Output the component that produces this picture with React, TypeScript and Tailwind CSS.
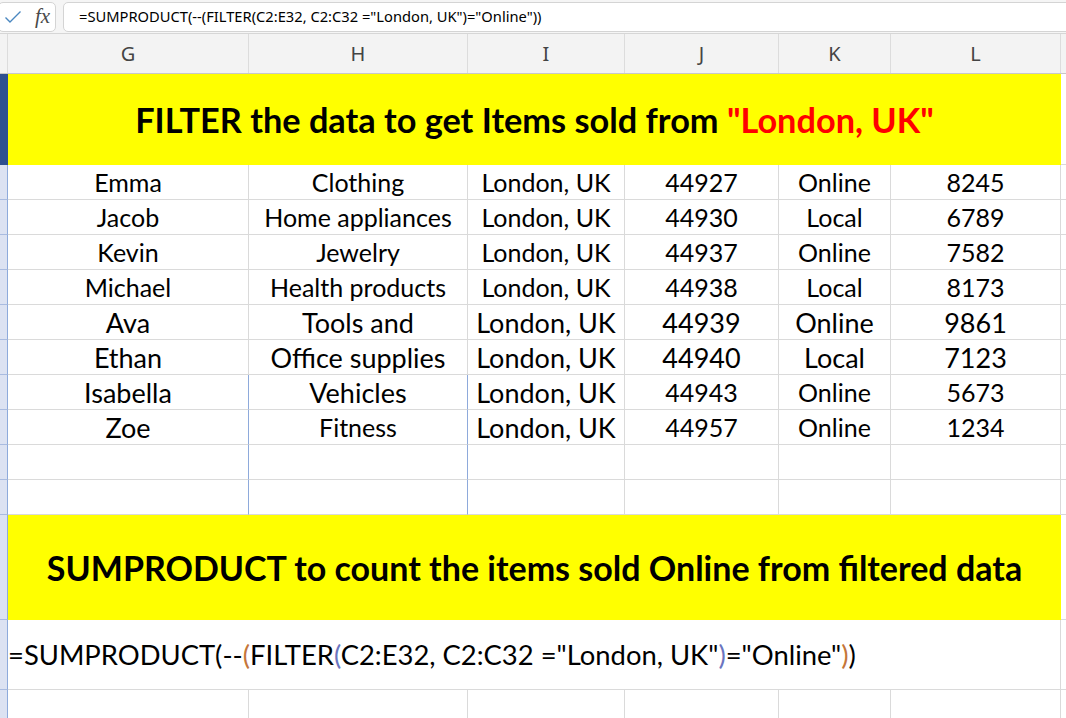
import React from "react";

const W = ["w-[241px]", "w-[219px]", "w-[157px]", "w-[154px]", "w-[112px]", "w-[170px]"];

type RowData = { cells: string[]; big: boolean[] };

const rows: RowData[] = [
  { cells: ["Emma", "Clothing", "London, UK", "44927", "Online", "8245"], big: [false, false, false, false, false, false] },
  { cells: ["Jacob", "Home appliances", "London, UK", "44930", "Local", "6789"], big: [false, false, false, false, false, false] },
  { cells: ["Kevin", "Jewelry", "London, UK", "44937", "Online", "7582"], big: [false, false, false, false, false, false] },
  { cells: ["Michael", "Health products", "London, UK", "44938", "Local", "8173"], big: [false, false, false, false, false, false] },
  { cells: ["Ava", "Tools and", "London, UK", "44939", "Online", "9861"], big: [true, true, true, true, true, true] },
  { cells: ["Ethan", "Office supplies", "London, UK", "44940", "Local", "7123"], big: [true, true, true, true, true, true] },
  { cells: ["Isabella", "Vehicles", "London, UK", "44943", "Online", "5673"], big: [true, true, true, false, false, false] },
  { cells: ["Zoe", "Fitness", "London, UK", "44957", "Online", "1234"], big: [true, false, true, false, false, false] },
];

const font = { fontFamily: "Lato, 'Open Sans', sans-serif" };

function RowHead({ dark = false, h }: { dark?: boolean; h: string }) {
  return (
    <div
      className={`${h} w-[8px] shrink-0 border-r border-b ${
        dark ? "bg-[#2f5090] border-r-[#2f5090] border-b-[#2f5090]" : "bg-[#dce2f2] border-r-[#8eaadb] border-b-[#a9bbe0]"
      }`}
    />
  );
}

function DataRow({ r, blueLines }: { r?: RowData; blueLines: boolean }) {
  return (
    <div className="flex h-[35px]">
      <RowHead h="h-[35px]" />
      {W.map((w, i) => (
        <div
          key={i}
          className={`${w} h-[35px] shrink-0 border-r border-b border-[#dadada] flex items-center justify-center whitespace-nowrap text-black ${
            blueLines && (i === 0 || i === 1) ? "border-r-[#8eaadb]" : ""
          } ${r && r.big[i] ? "text-[27px]" : "text-[25px]"}`}
          style={font}
        >
          <span className="leading-none pt-[1px]">{r ? r.cells[i] : ""}</span>
        </div>
      ))}
      <div className="flex-1 h-[35px] border-b border-[#dadada]" />
    </div>
  );
}

function Check() {
  return (
    <svg width="18" height="14" viewBox="0 0 18 14" className="block">
      <path d="M1.5 7.5 L6 12 L16.5 1.5" fill="none" stroke="#4a87c0" strokeWidth="1.4" />
    </svg>
  );
}

export default function App() {
  return (
    <div className="w-[1066px] h-[718px] overflow-hidden bg-white">
      {/* formula bar */}
      <div className="h-[34px] bg-[#f5f5f5] border-b border-[#d6d6d6] flex items-center gap-[7px] pl-0">
        <div className="h-[30px] w-[58px] -ml-[2px] bg-white border border-[#d4d4d4] rounded-[5px] flex items-center pl-[5px] gap-[13px]">
          <Check />
          <span
            className="italic text-[21px] text-[#4a4a4a] leading-none"
            style={{ fontFamily: "'Liberation Serif', serif" }}
          >
            fx
          </span>
        </div>
        <div className="h-[30px] flex-1 -mr-[10px] bg-white border border-[#d4d4d4] rounded-[5px] flex items-center pl-[15px]">
          <span className="text-[14.7px] text-black whitespace-nowrap" style={{ fontFamily: "'Noto Sans', 'Open Sans', sans-serif" }}>
            =SUMPRODUCT(--(FILTER(C2:E32, C2:C32 ="London, UK")="Online"))
          </span>
        </div>
      </div>

      {/* column headers */}
      <div className="flex h-[40px] bg-[#f3f3f3] border-b border-[#c8c8c8]">
        <div className="w-[8px] shrink-0 border-r border-[#dcdcdc]" />
        {["G", "H", "I", "J", "K", "L"].map((c, i) => (
          <div
            key={c}
            className={`${W[i]} shrink-0 border-r border-[#dcdcdc] flex items-center justify-center text-[20px] text-[#444]`}
            style={{ fontFamily: "'Noto Sans', 'Open Sans', sans-serif" }}
          >
            {c}
          </div>
        ))}
        <div className="flex-1" />
      </div>

      {/* title row 1 */}
      <div className="flex h-[91px]">
        <div className="h-[91px] w-[8px] shrink-0 bg-[#2f5090]" />
        <div
          className="w-[1053px] h-[91px] shrink-0 bg-[#ffff00] flex items-center justify-center font-bold text-[34.3px] text-black whitespace-nowrap"
          style={font}
        >
          <span>
            FILTER the data to get Items sold from <span className="text-[#ff0000]">"London, UK"</span>
          </span>
        </div>
        <div className="flex-1 border-b border-[#dadada]" />
      </div>

      {rows.map((r, i) => (
        <DataRow key={i} r={r} blueLines={i >= 6} />
      ))}
      <DataRow blueLines />
      <DataRow blueLines />

      {/* title row 2 */}
      <div className="flex h-[105px]">
        <RowHead h="h-[105px]" />
        <div
          className="w-[1053px] h-[105px] shrink-0 bg-[#ffff00] flex items-center justify-center font-bold text-[34px] text-black whitespace-nowrap"
          style={font}
        >
          SUMPRODUCT to count the items sold Online from filtered data
        </div>
        <div className="flex-1 border-b border-[#dadada]" />
      </div>

      {/* formula row */}
      <div className="flex h-[70px]">
        <RowHead h="h-[70px]" />
        <div
          className="w-[1053px] h-[70px] shrink-0 border-r border-b border-[#dadada] flex items-center pl-0 text-[27.4px] text-black whitespace-nowrap"
          style={font}
        >
          <span>
            =SUMPRODUCT(--<span className="text-[#c5763a]">(</span>FILTER
            <span className="text-[#6b75c0]">(</span>C2:E32, C2:C32 ="London, UK"
            <span className="text-[#6b75c0]">)</span>="Online"<span className="text-[#c5763a]">)</span>)
          </span>
        </div>
        <div className="flex-1 border-b border-[#dadada]" />
      </div>

      <DataRow blueLines={false} />
    </div>
  );
}
